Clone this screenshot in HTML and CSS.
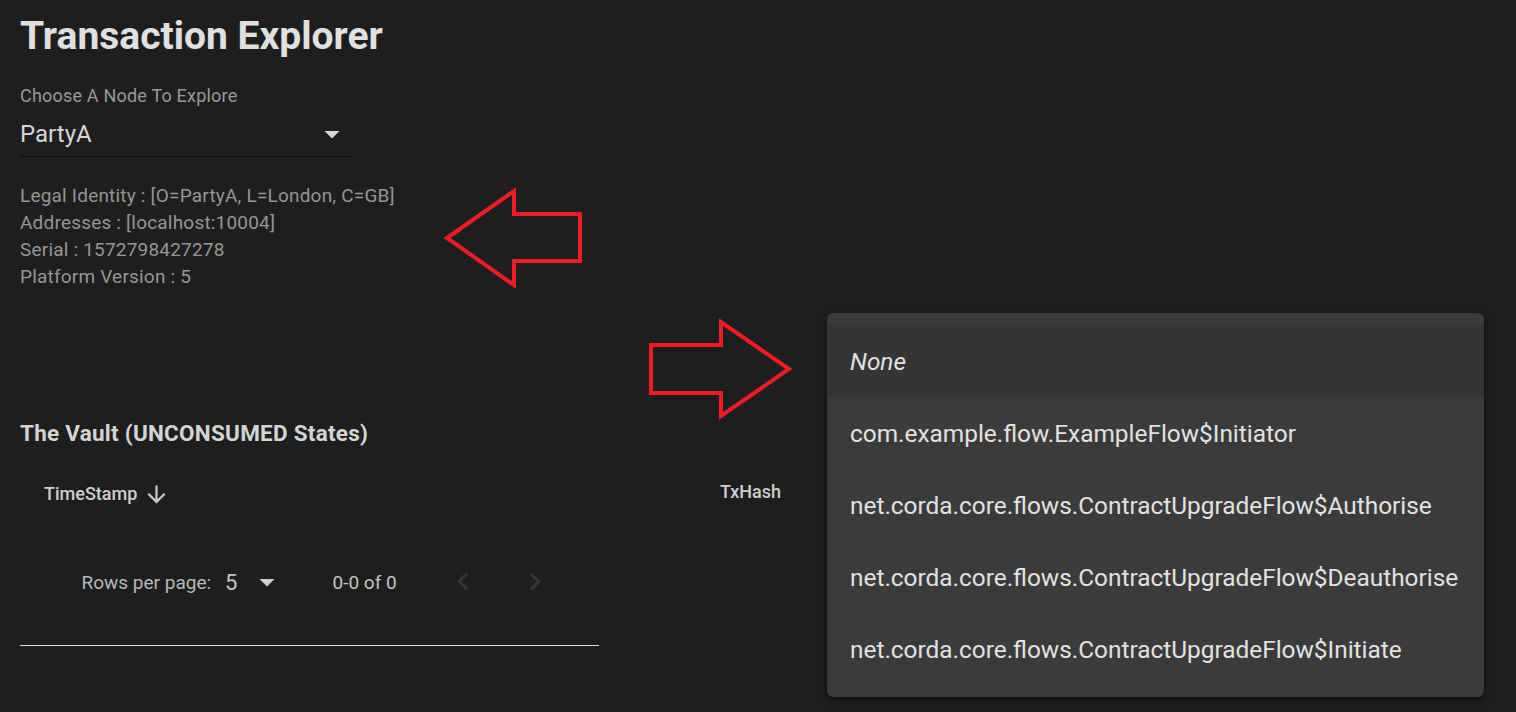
FILE: index.html
```html
<!DOCTYPE html>
<html lang="en">
<head>
<meta charset="utf-8">
<title>Transaction Explorer</title>
<link rel="stylesheet" href="styles.css">
</head>
<body>
<div class="page">
  <h1 class="title">Transaction Explorer</h1>

  <div class="field">
    <div class="field-label">Choose A Node To Explore</div>
    <div class="select">
      <span class="select-value">PartyA</span>
      <svg class="select-icon" viewBox="0 0 24 24"><path d="M7 10l5 5 5-5z"/></svg>
    </div>
  </div>

  <div class="info">
    <div>Legal Identity : [O=PartyA, L=London, C=GB]</div>
    <div>Addresses : [localhost:10004]</div>
    <div>Serial : 1572798427278</div>
    <div>Platform Version : 5</div>
  </div>

  <h2 class="vault-title">The Vault (UNCONSUMED States)</h2>

  <div class="table-head">
    <div class="th th-time">TimeStamp
      <svg class="sort-icon" viewBox="0 0 24 24"><path d="M20 12l-1.41-1.41L13 16.17V4h-2v12.17l-5.58-5.59L4 12l8 8 8-8z"/></svg>
    </div>
    <div class="th th-hash">TxHash</div>
  </div>

  <div class="pagination">
    <span class="pg-caption">Rows per page:</span>
    <div class="pg-select">
      <span class="pg-select-value">5</span>
      <svg class="pg-select-icon" viewBox="0 0 24 24"><path d="M7 10l5 5 5-5z"/></svg>
    </div>
    <span class="pg-range">0-0 of 0</span>
    <div class="pg-actions">
      <span class="pg-btn"><svg viewBox="0 0 24 24"><path d="M15.41 16.09l-4.58-4.59 4.58-4.59L14 5.5l-6 6 6 6z"/></svg></span>
      <span class="pg-btn"><svg viewBox="0 0 24 24"><path d="M8.59 16.34l4.58-4.59-4.58-4.59L10 5.75l6 6-6 6z"/></svg></span>
    </div>
  </div>

  <div class="divider"></div>
</div>

<ul class="menu">
  <li class="menu-item selected"><em>None</em></li>
  <li class="menu-item">com.example.flow.ExampleFlow$Initiator</li>
  <li class="menu-item">net.corda.core.flows.ContractUpgradeFlow$Authorise</li>
  <li class="menu-item">net.corda.core.flows.ContractUpgradeFlow$Deauthorise</li>
  <li class="menu-item">net.corda.core.flows.ContractUpgradeFlow$Initiate</li>
</ul>

<svg class="annotations" viewBox="0 0 1516 712" width="1516" height="712">
  <polygon class="arrow" points="447,238 514,191 514,214 580,214 580,261 514,261 514,285"/>
  <polygon class="arrow" points="651,345 721,345 721,322 789,369 721,416 721,393 651,393"/>
</svg>
</body>
</html>
```

FILE: styles.css
```css
html, body {
  margin: 0;
  padding: 0;
  background: #1e1e1e;
  width: 1516px;
  height: 712px;
  overflow: hidden;
  font-family: Roboto, "Liberation Sans", sans-serif;
}

.page {
  padding: 13px 20px 0;
}

.title {
  margin: 0;
  font-size: 39px;
  line-height: 46px;
  font-weight: 700;
  color: #e0e0e0;
}

.field {
  margin-top: 28px;
  width: 330px;
}

.field-label {
  font-size: 18px;
  line-height: 18px;
  letter-spacing: 0.2px;
  color: #999999;
}

.select {
  margin-top: 11px;
  display: flex;
  align-items: center;
  justify-content: space-between;
  height: 36px;
  padding-bottom: 4px;
  border-bottom: 1px solid #0d0d0d;
}

.select-value {
  font-size: 24px;
  line-height: 36px;
  color: #d6d6d6;
}

.select-icon {
  width: 36px;
  height: 36px;
  fill: #d8d8d8;
}

.info {
  margin-top: 25px;
  font-size: 19px;
  line-height: 27px;
  letter-spacing: 0.2px;
  color: #969696;
}

.vault-title {
  margin: 128px 0 0;
  font-size: 22.5px;
  line-height: 30px;
  font-weight: 700;
  letter-spacing: 0.25px;
  color: #d4d4d4;
}

.table-head {
  display: flex;
  margin-top: 28px;
  height: 36px;
}

.th {
  font-size: 18px;
  line-height: 36px;
  font-weight: 500;
  color: #cfcfcf;
}

.th-time {
  width: 652px;
  padding-left: 24px;
  display: flex;
  align-items: center;
}

.sort-icon {
  width: 27px;
  height: 27px;
  margin-left: 5.5px;
  fill: #c8c8c8;
}

.th-hash {
  padding-left: 24px;
  margin-top: -2px;
}

.pagination {
  display: flex;
  align-items: center;
  height: 78px;
  margin-top: 31px;
  padding-left: 61.5px;
  color: #b8b8b8;
}

.pg-caption {
  font-size: 19px;
  width: 143.5px;
  flex: none;
}

.pg-select {
  display: flex;
  align-items: center;
  margin-right: 48px;
}

.pg-select-value {
  font-size: 22px;
  color: #c4c4c4;
  width: 23.5px;
}

.pg-select-icon {
  width: 36px;
  height: 36px;
  fill: #d0d0d0;
}

.pg-range {
  font-size: 19px;
  color: #c4c4c4;
}

.pg-actions {
  display: flex;
  margin-left: 30px;
}

.pg-btn {
  width: 72px;
  height: 72px;
  display: flex;
  align-items: center;
  justify-content: center;
}

.pg-btn svg {
  width: 36px;
  height: 36px;
  fill: #363636;
}

.divider {
  margin-top: 24px;
  width: 579px;
  height: 1px;
  background: #dcdcdc;
}

.menu {
  position: absolute;
  left: 827px;
  top: 313px;
  width: 657px;
  margin: 0;
  padding: 12px 0;
  list-style: none;
  background: #3b3b3b;
  border-radius: 6px;
  box-shadow: 0 4px 8px rgba(0, 0, 0, 0.35), 0 1px 3px rgba(0, 0, 0, 0.3);
}

.menu-item {
  height: 72px;
  display: flex;
  align-items: center;
  padding-left: 23px;
  font-size: 24.4px;
  color: #e2e2e2;
  white-space: nowrap;
}

.menu-item.selected {
  background: #353535;
}

.annotations {
  position: absolute;
  left: 0;
  top: 0;
  pointer-events: none;
}

.arrow {
  fill: none;
  stroke: #ed1c24;
  stroke-width: 4;
  stroke-linejoin: miter;
}
```
